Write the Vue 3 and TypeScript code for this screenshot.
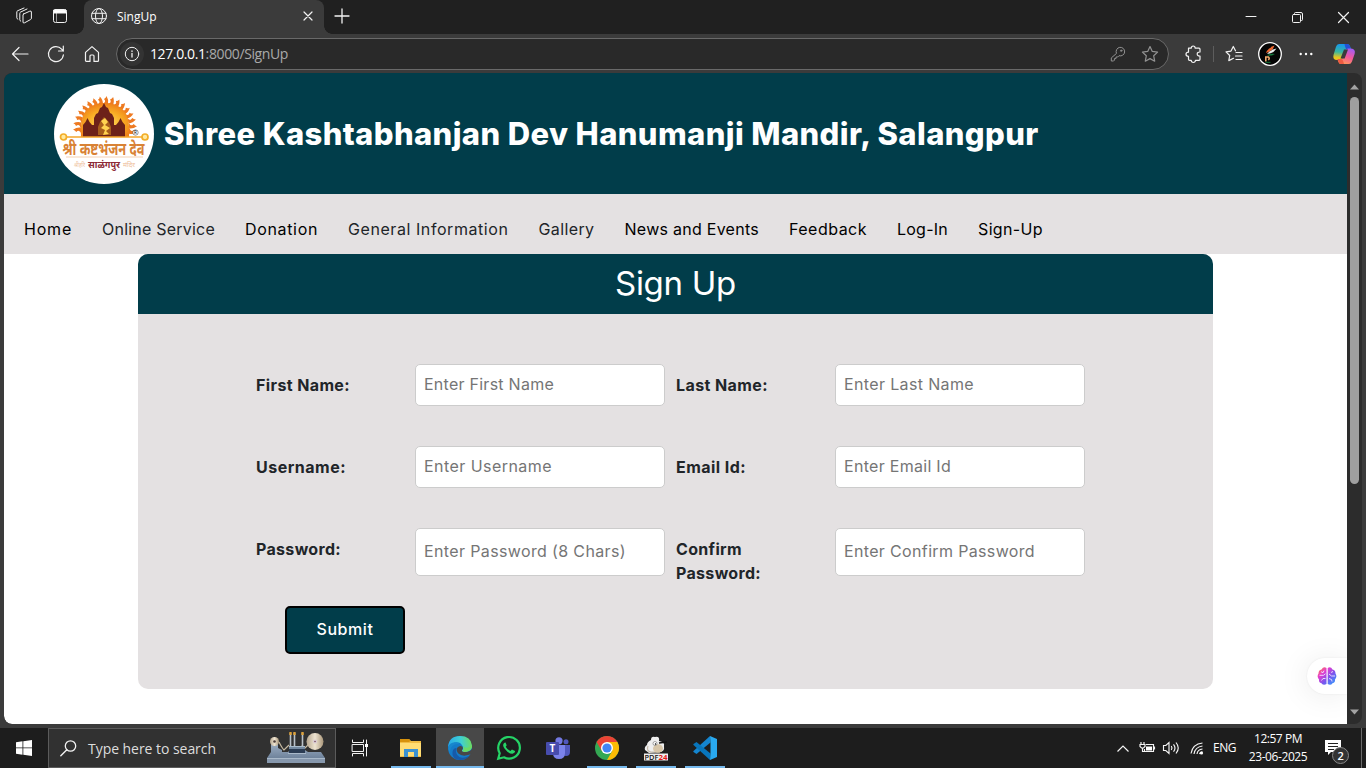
<script setup lang="ts">
import type { Directive } from 'vue'

interface NavItem { text: string; width: number; link: boolean }
interface Field { label: string; width: number; hint: string; hintWidth: number }

const nav: NavItem[] = [
  { text: 'Home', width: 48, link: true },
  { text: 'Online Service', width: 113, link: false },
  { text: 'Donation', width: 73, link: true },
  { text: 'General Information', width: 160.5, link: false },
  { text: 'Gallery', width: 56, link: false },
  { text: 'News and Events', width: 134.5, link: true },
  { text: 'Feedback', width: 78, link: true },
  { text: 'Log-In', width: 51, link: true },
  { text: 'Sign-Up', width: 65, link: true },
]

const fields: Field[] = [
  { label: 'First Name:', width: 94, hint: 'Enter First Name', hintWidth: 130 },
  { label: 'Last Name:', width: 92, hint: 'Enter Last Name', hintWidth: 130 },
  { label: 'Username:', width: 90, hint: 'Enter Username', hintWidth: 128 },
  { label: 'Email Id:', width: 70, hint: 'Enter Email Id', hintWidth: 107 },
  { label: 'Password:', width: 85, hint: 'Enter Password (8 Chars)', hintWidth: 202 },
  { label: 'Confirm\nPassword:', width: 85, hint: 'Enter Confirm Password', hintWidth: 191 },
]

const rays: number[] = Array.from({ length: 17 }, (_, i) => -96 + i * 12)

// Tracks a run of text so that its longest line fills the given width.
const vFit: Directive<HTMLElement, number> = {
  mounted(el, binding) {
    const ctx = document.createElement('canvas').getContext('2d')
    if (!ctx) return
    const cs = getComputedStyle(el)
    ctx.font = `${cs.fontWeight} ${cs.fontSize} ${cs.fontFamily}`
    const source = el instanceof HTMLInputElement ? el.placeholder : (el.textContent ?? '')
    const text = source.split('\n').map((s) => s.trim()).sort((a, b) => b.length - a.length)[0]
    el.style.letterSpacing = `${(binding.value - ctx.measureText(text).width) / text.length}px`
  },
}
</script>

<template>
  <div class="screen">
    <div class="strip">
      <span class="slot"><svg width="18" height="18" viewBox="0 0 18 18" class="line"><path d="M8.6 7 14.8 4.200Q16.400 3.600 16.400 5V11.200q0 .9-.8 1.300L9.600 15.800Q8 16.500 8 15V8q0-.7.6-1ZM5.700 14.200Q4.800 13.800 4.800 12.800V6.300q0-.8.700-1.200L12 2M2.800 12.200Q1.800 11.800 1.800 10.800V5q0-.8.700-1.200L9 1" /></svg></span>
      <span class="slot"><svg width="16" height="16" viewBox="0 0 16 16" class="line"><rect x="1.500" y="1.500" width="13" height="13" rx="2" /><path d="M4.500 5v9" stroke="#999" /><path d="M2 2h12v3H2z" fill="#fff" /></svg></span>
      <div class="tab">
        <svg width="18" height="18" viewBox="0 0 18 18" class="line"><circle cx="9" cy="9" r="7.500" /><ellipse cx="9" cy="9" rx="3.500" ry="7.500" /><path d="M2 6.300h14M2 11.700h14" /></svg>
        <span v-fit="39.500" class="tab-title">SingUp</span>
        <svg width="10" height="10" viewBox="0 0 10 10" class="line tab-x"><path d="m1 1 8 8M9 1 1 9" stroke-width="1.200" /></svg>
      </div>
      <span class="plus"><svg width="14" height="14" viewBox="0 0 14 14" class="line"><path d="M7 0v14M0 7h14" stroke-width="1.300" /></svg></span>
      <div class="controls">
        <span><svg width="10" height="10" viewBox="0 0 10 10" class="line"><path d="M0 4.500h10" /></svg></span>
        <span><svg width="11" height="11" viewBox="0 0 11 11" class="line"><rect x=".5" y="2.500" width="8" height="8" rx="1" /><path d="M2.500 2.500v-1Q2.500.5 3.500.5H9q1.500 0 1.500 1.500v5.500q0 1-1 1H8.500" /></svg></span>
        <span><svg width="11" height="11" viewBox="0 0 11 11" class="line"><path d="m.5.5 10 10M10.500.5l-10 10" stroke-width="1.200" /></svg></span>
      </div>
    </div>

    <div class="toolbar">
      <span class="slot"><svg width="18" height="18" viewBox="0 0 18 18" class="line"><path d="M17 9H1.500M8 2.500 1.500 9 8 15.500" stroke-width="1.200" /></svg></span>
      <span class="slot"><svg width="18" height="18" viewBox="0 0 18 18" class="line"><path d="M16.400 9.800A7.500 7.500 0 1 1 14.600 4.200L16.300 6M16.300 1.200V6h-4.800" stroke-width="1.200" /></svg></span>
      <span class="slot"><svg width="16" height="18" viewBox="0 0 16 18" class="line"><path d="M1.500 7.400 8 1.600l6.500 5.800V15.500q0 .9-.9.900H10V11q0-1-1-1H7q-1 0-1 1v5.400H2.400q-.9 0-.9-.9Z" stroke-width="1.200" /></svg></span>
      <div class="address">
        <span class="info"><svg width="16" height="16" viewBox="0 0 16 16" class="line"><circle cx="8" cy="8" r="6.700" /><path d="M8 7.300v3.700M8 4.800v.6" stroke-width="1.300" /></svg></span>
        <span v-fit="138" class="url"><b>127.0.0.1</b>:8000/SignUp</span>
        <span class="small-slot"><svg width="16" height="16" viewBox="0 0 16 16" class="line dim"><path d="M6.300 7.100A4.300 4.300 0 1 1 9 9.700L7.700 11H6v1.600H4.400v1.600L3.600 15H1.300v-2.700Z" /><circle cx="11.200" cy="4.700" r=".7" /></svg></span>
        <span class="small-slot"><svg width="18" height="18" viewBox="0 0 18 18" class="line dim"><path d="m9 1.500 2.300 4.900 5.300.7-3.900 3.700 1 5.400L9 13.600l-4.700 2.600 1-5.400-3.900-3.700 5.300-.7Z" stroke-width="1.200" /></svg></span>
      </div>
      <span class="slot puzzle"><svg width="17" height="18" viewBox="0 0 17 18" class="line"><path d="M3.500 3.200H6.200Q6.300 1 8.200 1t2 2.200H14q1 0 1 1V7q-2.800-.2-2.800 2t2.800 2v3.300q0 1-1 1h-3.500Q10.300 17.500 8.300 17.500t-2.100-2.200H4.500q-1 0-1-1v-3Q1 11.200 1 9.200t2.500-2Z" stroke-width="1.200" /></svg></span>
      <i class="sep" />
      <span class="slot"><svg width="18" height="18" viewBox="0 0 18 18" class="line"><path d="m8.500 13.300-4.700 2.300.9-5.100L1 6.900l5-.8L8.300 1.500l2.200 4.300M11 7.500h6M10.500 11h6.500M11 14.500h6" stroke-width="1.200" /></svg></span>
      <span class="slot"><svg width="24" height="24" viewBox="0 0 24 24"><circle cx="12" cy="12" r="11.300" fill="#050505" stroke="#fff" stroke-width="1.300" /><path d="M8 11Q9 6.500 16.500 3.500 15.500 8.500 8 11" fill="#f0672e" /><path d="M9 12Q12 8 18.500 6.500 15.500 11.500 9 12" fill="#eee" /><path d="M8.500 13.300q4-2 8.500-1.300-4.500 2.600-8.500 1.300" fill="#157a3c" /><path d="M7.800 19.500v-4.500h2.500q1.800 1.400 0 3" fill="none" stroke="#f0a86b" stroke-width="1.600" /><path d="M7.500 20.300h5" stroke="#157a3c" /></svg></span>
      <span class="slot"><svg width="14" height="4" viewBox="0 0 14 4" fill="#fff"><circle cx="1.700" cy="2" r="1.200" /><circle cx="7" cy="2" r="1.200" /><circle cx="12.300" cy="2" r="1.200" /></svg></span>
      <span class="slot copilot">
        <svg width="24" height="24" viewBox="0 0 24 24">
          <defs>
            <linearGradient id="cpA" x1=".4" y1="0" x2=".3" y2="1"><stop stop-color="#1696ee" /><stop offset=".5" stop-color="#38b7a0" /><stop offset=".85" stop-color="#e9c51f" /></linearGradient>
            <linearGradient id="cpB" x1=".7" y1="0" x2=".3" y2="1"><stop stop-color="#a35cf2" /><stop offset=".5" stop-color="#f2589c" /><stop offset="1" stop-color="#ff9a52" /></linearGradient>
          </defs>
          <path d="M7 2h8.500q1.800 0 2.600 2.500l.9 3h-3q-2.300 0-3 2.500l-1.600 5q-.9 3-3 3H5Q.4 18 1.500 13L4 4.800Q4.800 2 7 2" fill="url(#cpA)" />
          <path d="M12.500 2h3q1.800 0 2.600 2.500l.9 3h-4Q13.500 7.500 12.500 2" fill="#2451d6" />
          <path d="M17 22H9q-2 0-2.800-2.500L5.500 17H9q2 0 2.800-2.600l1.500-5Q14.100 6.500 16 6.500h3q5 .5 3.600 5.500L20 19.500Q19 22 17 22" fill="url(#cpB)" />
          <path d="M5.500 17H9q1.700 0 2.200 2.200l.8 2.800H9q-2 0-2.800-2.500Z" fill="#ee5b42" />
          <path d="M12 7.500h4l-3.400 9H8.500Z" fill="#3b3b3b" />
        </svg>
      </span>
    </div>

    <div class="view">
      <main class="page">
        <header class="banner">
          <svg class="logo" width="100" height="100" viewBox="0 0 100 100">
            <defs><radialGradient id="sun" cx=".5" cy=".6" r=".6"><stop stop-color="#ffe36a" /><stop offset=".6" stop-color="#f9ad24" /><stop offset="1" stop-color="#ee7d19" /></radialGradient></defs>
            <circle cx="50" cy="50" r="50" fill="#fff" />
            <g transform="translate(51 44)" fill="#ee7a22"><path v-for="a in rays" :key="a" :transform="`rotate(${a})`" d="M-3-24Q2-26-1-29 1-30 1.500-32 4-28 3-24Z" /></g>
            <path d="M27 53Q24 19 51 19T75 53Z" fill="url(#sun)" />
            <path d="M29 53V41l2.500-3 2-4 2 4 2.500 3h2V34l2-4 2-1 2-5 2-1 2-4 2 4 2 1 2 5 2 1 2 4v7h2l2.500-3 2-4 2 4 2.500 3v12Z" fill="#6d2119" />
            <path d="M44 51v-8l2-5 4-5 5 5 2 5v8Z" fill="#a65c1c" />
            <path d="m47 37 4-3 3 4-3 3 5 3-4 3 3 3-6 1 2-5-4-2 3-3Z" fill="#ffd250" />
            <circle cx="81.500" cy="48.500" r="2.700" fill="#fff" stroke="#333" stroke-width=".5" /><text x="80" y="50.300" font-size="4.500">R</text>
            <path d="M12 53h77" stroke="#f5a62a" stroke-width="1.700" /><circle cx="9.500" cy="53" r="3" fill="#ffe9a0" stroke="#f3ae28" stroke-width="1.700" /><circle cx="91" cy="53" r="3" fill="#ffe9a0" stroke="#f3ae28" stroke-width="1.700" />
            <path d="M12 73h77" stroke="#efb482" stroke-width=".6" />
            <text x="8.500" y="70.500" font-size="17" font-weight="700" fill="#d98235" textLength="82" lengthAdjust="spacingAndGlyphs">श्री कष्टभंजन देव</text>
            <text x="34" y="84" font-size="9.500" font-weight="700" fill="#8c2935" textLength="32" lengthAdjust="spacingAndGlyphs">साळंगपुर</text>
            <text x="20" y="83" font-size="6" fill="#eebc98" textLength="11" lengthAdjust="spacingAndGlyphs">श्रीहरि</text>
            <text x="69" y="83" font-size="6" fill="#eebc98" textLength="12" lengthAdjust="spacingAndGlyphs">मंदिर</text>
          </svg>
          <h1 v-fit="876">Shree Kashtabhanjan Dev Hanumanji Mandir, Salangpur</h1>
        </header>
        <nav class="menu">
          <span v-for="n in nav" :key="n.text" v-fit="n.width" :class="{ link: n.link }">{{ n.text }}</span>
        </nav>
        <section class="card">
          <h2><span v-fit="121">Sign Up</span></h2>
          <form class="form">
            <template v-for="f in fields" :key="f.hint">
              <label v-fit="f.width">{{ f.label }}</label>
              <input v-fit="f.hintWidth" :placeholder="f.hint" />
            </template>
          </form>
          <button class="submit" type="button"><span v-fit="57">Submit</span></button>
        </section>
      </main>
      <div class="scroll">
        <svg width="9" height="6" viewBox="0 0 9 6"><path d="M0 5.500 4.500.5 9 5.500Z" fill="#a3a3a3" /></svg>
        <i class="thumb" />
        <svg width="9" height="6" viewBox="0 0 9 6"><path d="M0 .5 4.500 5.500 9 .5Z" fill="#a3a3a3" /></svg>
      </div>
      <div class="assist">
        <svg width="20" height="20" viewBox="0 0 20 20">
          <defs><linearGradient id="brain" x1="0" y1="0" x2="1" y2="1"><stop stop-color="#ff8b2c" /><stop offset=".3" stop-color="#e53cd0" /><stop offset=".6" stop-color="#7957ee" /><stop offset="1" stop-color="#28a8ff" /></linearGradient></defs>
          <path d="M9.500 2v16Q6.500 20 4.500 17.200 1.500 16.500 2 13.500-.5 10.500 1.500 7.500 1.500 4 4.500 3.500 6.500.2 9.500 2M10.700 2v16q3 2 4.800-.8 3-.7 2.500-3.700 2.500-3 .5-6 0-3.500-3-4-1.800-3.300-4.800-1.500" fill="url(#brain)" />
          <path d="M2.500 9.300h4l2-1.500M4 5.700l2 1 1-2M4.500 14.500l1.500-2h2.500M18 10h-3.500l-2.500-2M15.500 5l-1 2M12 12.500l2.500 1 .5 2" fill="none" stroke="#eee9ff" stroke-width=".9" />
        </svg>
      </div>
    </div>

    <footer class="taskbar">
      <span class="start"><svg width="16" height="16" viewBox="0 0 16 16" fill="#fff"><path d="M0 2.300 6.500 1.300v6.200H0ZM7.300 1.200 16 0v7.500H7.300ZM0 8.300h6.500v6.400L0 13.700ZM7.300 8.300H16V16l-8.700-1.200Z" /></svg></span>
      <div class="search">
        <svg width="17" height="17" viewBox="0 0 17 17" class="line"><circle cx="10.500" cy="6" r="5.200" stroke-width="1.300" /><path d="m6.800 9.800-6 6" stroke-width="1.400" /></svg>
        <span v-fit="128">Type here to search</span>
        <svg class="machine" width="60" height="34" viewBox="0 0 60 34">
          <defs><linearGradient id="base" x1="0" y1="0" x2="0" y2="1"><stop stop-color="#a3b4c8" /><stop offset="1" stop-color="#60758f" /></linearGradient><linearGradient id="reel"><stop stop-color="#b5a58d" /><stop offset=".5" stop-color="#eee4d1" /><stop offset="1" stop-color="#a99679" /></linearGradient></defs>
          <path d="M5 10h7v7l4 2v2h6l2-2h15l3 2h13l4 6v5H1v-5l4-6Z" fill="url(#base)" />
          <path d="M1 27h58v5H1Z" fill="#8798ad" /><path d="M1 27.500h58" stroke="#a9b9ca" />
          <circle cx="8.500" cy="10.500" r="4.500" fill="url(#reel)" /><circle cx="8.500" cy="10.500" r="1.300" fill="#493b38" />
          <path d="M13 11q3 6 5 8l5-5M35 15l4 2 3-3" fill="none" stroke="#c6baa2" stroke-width="1.200" />
          <path d="M24.500 2v14M28.500 2v14M36.500 2v14" stroke="#b9c1c8" stroke-width="1.600" /><path d="M24.500 1v3M28.500 1v3M36.500 1v3" stroke="#dea23a" stroke-width="2.400" />
          <circle cx="49" cy="10.500" r="8.500" fill="url(#reel)" /><circle cx="49" cy="10.500" r="2" fill="#dacbd7" /><circle cx="49" cy="10.500" r=".8" fill="#754d57" />
          <path d="M23 15h16v6H23Z" fill="#74899f" /><path d="M23 15.500h16" stroke="#a9bccc" /><path d="M23 18h16v4H23Z" fill="#2b3c53" /><path d="M22 22.500h18" stroke="#a9b9ca" />
        </svg>
      </div>
      <span class="app view-btn"><svg width="17" height="16" viewBox="0 0 17 16" class="line"><path d="M.5 0v2.500h11V0M.5 16v-2.500h11V16M.5 4.500h11v7H.5ZM14.500 0v16" /><path d="M13 4h3v3h-3z" fill="#fff" stroke="none" /></svg></span>
      <div class="apps">
        <span class="app open"><svg width="22" height="20" viewBox="0 0 22 20"><path d="M0 1h9l2 2h10v16H0Z" fill="#f0bb43" /><path d="M0 1h9l1.500 2L9 4H0Z" fill="#d7920c" /><path d="M0 5h21v13H0Z" fill="#ffdc73" /><path d="M4 11h14v8h-4v-5H8v5H4Z" fill="#3c91d0" /></svg></span>
        <span class="app open active"><svg width="24" height="24" viewBox="0 0 24 24"><defs><linearGradient id="edge" x1="0" y1=".4" x2="1" y2=".3"><stop stop-color="#28a9e9" /><stop offset=".55" stop-color="#3fcfd2" /><stop offset="1" stop-color="#70dc5a" /></linearGradient></defs><circle cx="12" cy="12" r="12" fill="#147bc8" /><path d="M0 11Q1 0 12 0q11 0 12 9.500 0 6.500-7 6.500-3.500 0-3-1.700 2-2 .4-4.600Q12 5.500 7 6.500 2 7.500 0 11" fill="url(#edge)" /><path d="M8.500 12q-2 6 3 9 4 2 10-1.500-4 5-10 4.500-8-1-7-8 .7-4 4-4" fill="#165aa9" /><path d="M9.400 11.500q-1.800 3 1 6 4 3.700 11.500 1L24 17v-4q-2 3-7 3-3.500 0-3-1.700 1.500-1.800.5-3.500-2.500-2-5.100.7" fill="#484848" /><path d="M14.500 10.500Q12 7 7 8.500q-5.500 2-5 9Q-1 11 2 8 8 3.500 14.500 10.500" fill="#1787cd" /><path d="M15 10q2 3-.8 5 2 1.700 5.800.3 4-1.600 4-5.800Q19 13.500 15 10" fill="#6cda65" /></svg></span>
        <span class="app"><svg width="24" height="24" viewBox="0 0 24 24"><path d="m1.200 22.800 1.500-5.600A10.800 10.800 0 1 1 6.900 21.300Z" fill="none" stroke="#25d366" stroke-width="2.200" /><path d="M8.500 6.500q-.6-.3-1.400.5Q5 9 7.500 12.500q4 5.500 8 5.300 3-.8 2.500-2.800l-3-1.500q-.5 0-1.500 1.500Q10 13.500 8.700 10.800l1-1.500Z" fill="#25d366" /></svg></span>
        <span class="app"><svg width="24" height="22" viewBox="0 0 24 22"><circle cx="13" cy="3.800" r="3.600" fill="#7379e2" /><circle cx="20" cy="4.700" r="2.500" fill="#5058bd" /><path d="M16 8h8v7q0 4-4 4-3 0-4-2Z" fill="#5058bd" /><path d="M7 8h12v8q0 6-6 6t-6-6Z" fill="#7b83eb" /><rect y="5" width="13" height="13" rx="1" fill="#474cad" /><text x="3.500" y="15.300" font-size="10" font-weight="700" fill="#fff">T</text></svg></span>
        <span class="app open"><svg width="24" height="24" viewBox="0 0 24 24"><circle cx="12" cy="12" r="12" fill="#34a853" /><path d="M1.600 6A12 12 0 0 1 22.400 6H12L6.800 15Z" fill="#ea4335" /><path d="M22.400 6A12 12 0 0 1 12 24l5.200-9L12 6Z" fill="#fbbc05" /><circle cx="12" cy="12" r="6" fill="#fff" /><circle cx="12" cy="12" r="4.600" fill="#4285f4" /></svg></span>
        <span class="app open"><svg width="26" height="25" viewBox="0 0 26 25"><path d="M8 4Q8 0 12 1q5-1 4 4 6 1 5 5 1 6-5 6l-10 1-4-3q-1-3 2-5Q4 6 8 4" fill="#eee" /><path d="M5 10q-2 5 3 6h9" fill="none" stroke="#c5bbac" stroke-width="1.200" /><ellipse cx="15" cy="12.500" rx="5" ry="4.300" fill="#d7c6a9" /><circle cx="12" cy="7.500" r="2" fill="#fff" stroke="#555" stroke-width=".5" /><circle cx="12.500" cy="8" r=".7" /><path d="m16 7 8-1" stroke="#111" stroke-width="1.500" /><rect x="1" y="17.500" width="24" height="7" fill="#eee" /><text x="1.500" y="23.800" font-size="7.500" font-weight="600" fill="#161616" textLength="14" lengthAdjust="spacingAndGlyphs">PDF</text><text x="15.500" y="23.800" font-size="7.500" font-weight="700" fill="#e41919" textLength="9" lengthAdjust="spacingAndGlyphs">24</text></svg></span>
        <span class="app open"><svg width="24" height="24" viewBox="0 0 24 24"><path d="M17.500 6.500 3.500 18 .5 16Q0 15.500.5 15L17 0Z" fill="#1485cf" /><path d="M17.500 17.500 3.500 6 .5 8Q0 8.500.5 9L17 24Z" fill="#0875bb" /><path d="M17 0 24 3v18l-7 3 .5-6.500v-11Z" fill="#29a9ef" /></svg></span>
      </div>
      <div class="tray">
        <svg class="chev" width="12" height="7" viewBox="0 0 12 7"><path d="m.5 6.500 5.500-5.500 5.500 5.500" /></svg>
        <svg class="batt" width="17" height="14" viewBox="0 0 17 14"><path d="M7 3.500h7.500v7h-9V8M2 1v2M5 1v2M1 3.500h5v2L4.500 7h-2L1 5.500ZM3.500 7v3.500H6" /><path d="M7 5.500h6v4H7z" fill="#fff" stroke="none" /><path d="M15.500 5.500v3" /></svg>
        <svg class="vol" width="17" height="14" viewBox="0 0 17 14"><path d="M.5 4.500h2.300L6 1.500v11L2.800 9.500H.5ZM8.300 5q1.400 2 0 4M10.500 3.300q3 3.700 0 7.400M13 1.500q4.500 5.500 0 11" /></svg>
        <svg class="wifi" width="14" height="14" viewBox="0 0 14 14"><path d="M1 12.500Q2.500 3 12.500 2M4 13Q5 6 12.500 5M7 13Q7.500 8.500 12.500 8M9.500 13Q10 11 12.500 10.700" /><circle cx="11.500" cy="12" r="1.600" fill="#fff" stroke="none" /></svg>
        <span v-fit="23" class="lang">ENG</span>
        <div class="clock"><span v-fit="48">12:57 PM</span><span v-fit="58.500">23-06-2025</span></div>
        <svg class="note" width="25" height="26" viewBox="0 0 25 26"><path d="M0 1h16v12H6l-3 3v-3H0Z" fill="#fff" stroke="none" /><path d="M3 4.500h10M3 7.500h10M3 10.500h6" stroke="#222" /><circle cx="15.500" cy="16.500" r="8" fill="#333" stroke="#888" /><text x="12.500" y="20.800" font-size="11" font-weight="600" fill="#fff" stroke="none">2</text></svg>
        <i class="peek" />
      </div>
    </footer>
  </div>
</template>

<style>
body { margin: 0; overflow: hidden; }
</style>

<style scoped>
.screen { width: 1366px; height: 768px; overflow: hidden; display: flex; flex-direction: column; background: #3b3b3b; font-family: "Open Sans", "Noto Sans", sans-serif; color: #fff; }
.screen * { box-sizing: border-box; }
svg { display: block; flex: none; overflow: visible; }
.line { fill: none; stroke: #f2f2f2; stroke-width: 1; stroke-linecap: round; stroke-linejoin: round; }
.dim { stroke: #929292; }
.strip { height: 34px; flex: none; background: #202020; display: flex; padding-left: 6px; }
.slot { width: 36px; flex: none; display: flex; align-items: center; justify-content: center; }
.strip .slot { height: 32px; }
.tab { position: relative; width: 240px; margin-left: 6px; background: #3b3b3b; border-radius: 8px 8px 0 0; display: flex; align-items: center; padding: 0 11px 2px 6px; }
.tab::before, .tab::after { content: ""; position: absolute; bottom: 0; width: 8px; height: 8px; }
.tab::before { left: -8px; background: radial-gradient(circle at 0 0, #202020 7.500px, #3b3b3b 8px); }
.tab::after { right: -8px; background: radial-gradient(circle at 100% 0, #202020 7.500px, #3b3b3b 8px); }
.tab-title { font-size: 12px; margin-left: 9px; white-space: nowrap; }
.tab-x { margin-left: auto; }
.plus { width: 35px; height: 31px; display: flex; align-items: center; justify-content: center; }
.controls { margin-left: auto; display: flex; height: 34px; }
.controls span { width: 46px; display: flex; align-items: center; justify-content: center; }
.toolbar { height: 39px; flex: none; display: flex; align-items: center; padding-left: 2px; }
.toolbar .slot { height: 39px; }
.address { width: 1053px; height: 32px; margin-left: 6px; border: 1px solid #696969; border-radius: 16px; background: #292929; display: flex; align-items: center; padding: 0 2px 0 3px; }
.info { width: 24px; height: 24px; border-radius: 12px; background: #333; display: flex; align-items: center; justify-content: center; }
.url { flex: 1; margin-left: 6px; font-size: 14px; line-height: 20px; color: #a9a9a9; }
.url b { font-weight: 400; color: #fff; }
.small-slot { width: 32px; display: flex; justify-content: center; }
.puzzle { margin-left: 6px; }
.sep { width: 1px; height: 16px; background: #5d5d5d; margin: 0 2px; }
.copilot { margin-left: 2px; }
.view { position: relative; width: 1358px; height: 651px; margin: 0 4px; flex: none; display: flex; border-radius: 8px; overflow: hidden; background: #2c2c2c; }
.page { width: 1343px; border-radius: 8px 0 0 8px; background: linear-gradient(#013d4a 121px, #fff 121px); font-family: Inter, "Noto Sans", sans-serif; color: #212529; }
.banner { height: 121px; display: flex; align-items: center; padding-left: 50px; }
.logo { font-family: "Noto Sans", "Noto Sans Devanagari", sans-serif; }
h1 { margin: 0 0 0 10px; font-size: 31px; line-height: 40px; font-weight: 800; color: #fff; white-space: nowrap; }
.menu { height: 60px; background: #e4e1e2; display: flex; gap: 30px; padding: 23px 20px 0; font-size: 16px; line-height: 24px; white-space: nowrap; }
.link { color: #000; }
.card { width: 1075px; height: 435px; margin-left: 134px; background: #e4e1e2; border-radius: 10px; overflow: hidden; }
h2 { margin: 0; height: 60px; background: #013d4a; color: #fff; text-align: center; font-size: 33px; font-weight: 400; line-height: 58px; }
.form { margin: 50px 0 0 117px; display: grid; grid-template-columns: 150px 250px 150px 250px; grid-template-rows: 42px 42px 48px; gap: 40px 10px; }
label { padding: 9px 0 0 1px; font-size: 16px; line-height: 24px; font-weight: 700; white-space: pre; }
input { width: 250px; height: 100%; border: 1px solid #ccc; border-radius: 5px; padding: 0 8px 2px; background: #fff; font-family: inherit; font-size: 16px; outline: none; }
input::placeholder { color: #757575; opacity: 1; }
.submit { display: block; width: 120px; height: 48px; margin: 30px 0 0 147px; padding: 0 0 2px; border: 2px solid #000; border-radius: 5px; background: #013d4a; color: #fff; font-family: inherit; font-size: 16px; font-weight: 500; }
.scroll { width: 15px; display: flex; flex-direction: column; align-items: center; padding: 11px 0 9px; }
.thumb { width: 9px; height: 387px; border-radius: 5px; background: #9f9f9f; margin: 7px 0 auto; }
.assist { position: absolute; left: 1303px; top: 585px; width: 40px; height: 36px; background: #fff; border-radius: 18px 0 0 18px; display: flex; align-items: center; padding-left: 10px; box-shadow: -2px 2px 30px rgba(0, 0, 0, .08), 0 0 2px rgba(0, 0, 0, .08); clip-path: inset(-60px 0 -60px -60px); }
.taskbar { height: 40px; margin-top: 4px; flex: none; display: flex; background: #1d1d1d; }
.start { width: 48px; display: flex; align-items: center; justify-content: center; }
.search { width: 288px; border: 1px solid #5b5b5b; background: #313131; display: flex; align-items: center; padding-left: 11px; font-size: 14px; color: #ddd; white-space: nowrap; }
.search span { width: 128px; margin-left: 11px; }
.search .machine { margin-left: 50px; }
.app { width: 40px; display: flex; align-items: center; justify-content: center; border-bottom: 2px solid transparent; padding-top: 2px; }
.view-btn { width: 48px; }
.apps { display: flex; margin-left: 7px; gap: 9px; }
.open { border-color: #76b9ed; }
.active { width: 48px; margin: 0 -4px; background: #484848; }
.tray { margin-left: auto; display: flex; align-items: center; font-size: 12px; line-height: 18px; }
.tray svg { fill: none; stroke: #f5f5f5; stroke-width: 1.150; }
.batt { margin-left: 10px; }
.vol { margin-left: 7px; }
.wifi { margin-left: 10px; }
.lang { width: 23px; margin-left: 9px; white-space: nowrap; }
.clock { width: 60px; margin-left: 12px; display: flex; flex-direction: column; align-items: center; white-space: nowrap; }
.note { margin: 8px 0 0 17px; }
.tray .note { stroke-width: 1; }
.peek { width: 1px; height: 40px; background: #6a6a6a; margin: 0 4px 0 11px; }
</style>
